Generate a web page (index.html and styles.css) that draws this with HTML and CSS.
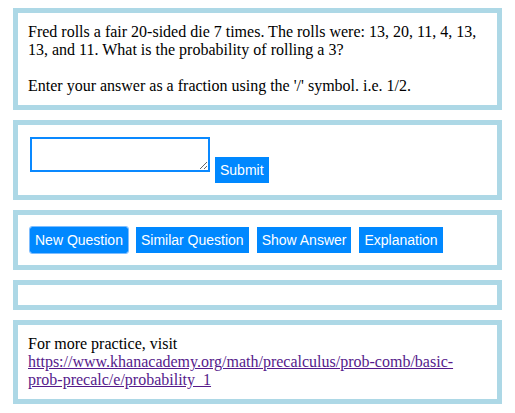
FILE: index.html
```html
<!DOCTYPE html>
<html>
<head>
<meta charset="utf-8">
<link rel="stylesheet" href="styles.css">
</head>
<body>
<div class="stack">
  <div class="box question">Fred rolls a fair 20-sided die 7 times. The rolls were: 13, 20, 11, 4, 13, 13, and 11. What is the probability of rolling a 3?<br><br>Enter your answer as a fraction using the '/' symbol. i.e. 1/2.</div>
  <div class="box answer-row">
    <textarea class="answer"></textarea>
    <button class="btn submit">Submit</button>
  </div>
  <div class="box actions">
    <button class="btn focused">New Question</button>
    <button class="btn">Similar Question</button>
    <button class="btn">Show Answer</button>
    <button class="btn">Explanation</button>
  </div>
  <div class="box empty"></div>
  <div class="box practice">For more practice, visit<br><a class="link" href="#">https://www.khanacademy.org/math/precalculus/prob-comb/basic-prob-precalc/e/probability_1</a></div>
</div>
</body>
</html>
```
FILE: styles.css
```css
body {
  margin: 8px;
  font-family: "Liberation Serif", serif;
  font-size: 16px;
  line-height: 18px;
  color: #000;
  background: #fff;
}
.stack {
  display: flex;
  flex-direction: column;
  gap: 10px;
}
.box {
  margin: 0 5px;
  border: 5px solid #add8e6;
  padding: 10px;
}
.answer-row {
  display: flex;
  align-items: flex-start;
}
.answer {
  box-sizing: border-box;
  width: 180px;
  height: 35px;
  margin: 2px;
  border: 2px solid #0a89ff;
  padding: 2px;
  outline: none;
}
.btn {
  font-family: "Liberation Sans", Arial, sans-serif;
  font-size: 14px;
  line-height: 16px;
  color: #fff;
  background: #0088ff;
  border: none;
  padding: 5px;
  margin: 2px;
}
.submit {
  margin: 22px 0 2px 3px;
}
.actions {
  display: flex;
  gap: 4px;
}
.focused {
  border-radius: 2px;
  outline: 1px solid #7dbdff;
  outline-offset: 0;
}
.empty {
  height: 0;
}
.link {
  color: #551a8b;
  overflow-wrap: break-word;
}
```
